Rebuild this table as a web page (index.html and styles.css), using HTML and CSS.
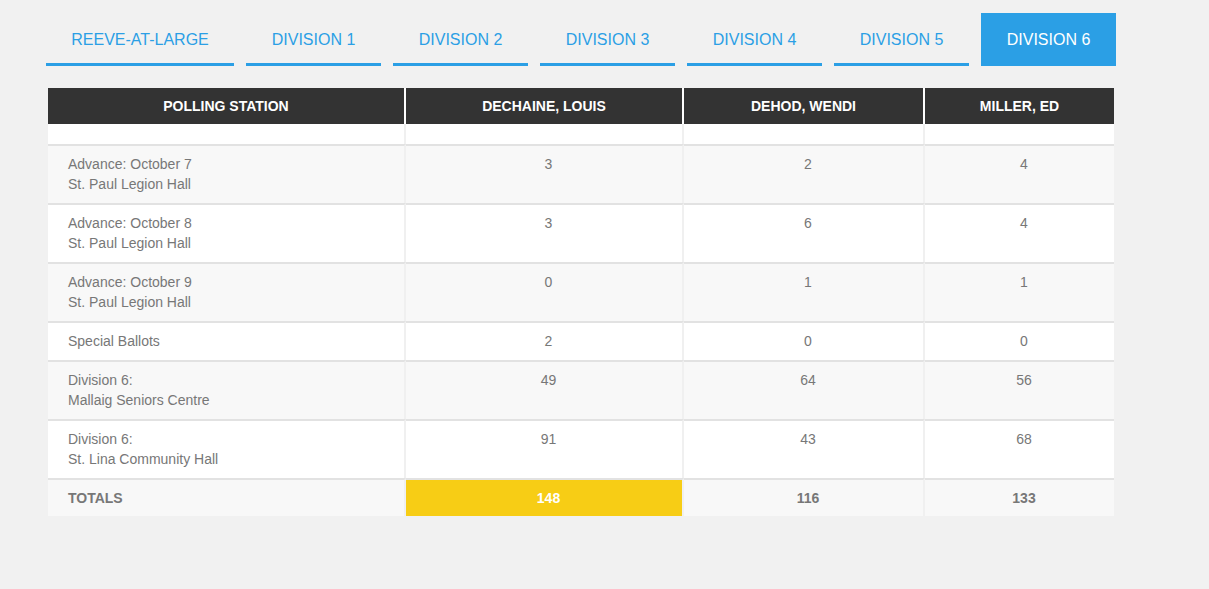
FILE: index.html
```html
<!DOCTYPE html>
<html>
<head>
<meta charset="utf-8">
<link rel="stylesheet" href="styles.css">
</head>
<body>
<nav class="tabs">
  <a class="tab">REEVE-AT-LARGE</a>
  <a class="tab">DIVISION 1</a>
  <a class="tab">DIVISION 2</a>
  <a class="tab">DIVISION 3</a>
  <a class="tab">DIVISION 4</a>
  <a class="tab">DIVISION 5</a>
  <a class="tab active">DIVISION 6</a>
</nav>
<table class="results">
  <colgroup>
    <col class="c1"><col class="c2"><col class="c3"><col class="c4">
  </colgroup>
  <thead>
    <tr><th>POLLING STATION</th><th>DECHAINE, LOUIS</th><th>DEHOD, WENDI</th><th>MILLER, ED</th></tr>
  </thead>
  <tbody>
    <tr class="empty"><td></td><td></td><td></td><td></td></tr>
    <tr class="alt"><td class="st">Advance: October 7<br>St. Paul Legion Hall</td><td>3</td><td>2</td><td>4</td></tr>
    <tr><td class="st">Advance: October 8<br>St. Paul Legion Hall</td><td>3</td><td>6</td><td>4</td></tr>
    <tr class="alt"><td class="st">Advance: October 9<br>St. Paul Legion Hall</td><td>0</td><td>1</td><td>1</td></tr>
    <tr><td class="st">Special Ballots</td><td>2</td><td>0</td><td>0</td></tr>
    <tr class="alt"><td class="st">Division 6:<br>Mallaig Seniors Centre</td><td>49</td><td>64</td><td>56</td></tr>
    <tr><td class="st">Division 6:<br>St. Lina Community Hall</td><td>91</td><td>43</td><td>68</td></tr>
    <tr class="totals"><td class="st">TOTALS</td><td class="win">148</td><td>116</td><td>133</td></tr>
  </tbody>
</table>
</body>
</html>
```
FILE: styles.css
```css
html, body {
  margin: 0;
  padding: 0;
  background: #f1f1f1;
  font-family: "Liberation Sans", Arial, sans-serif;
}
.tabs {
  display: flex;
  gap: 12px;
  padding: 13px 0 0 46px;
}
.tab {
  display: block;
  height: 50px;
  line-height: 53px;
  padding: 0 25px;
  border-bottom: 3px solid #2b9fe5;
  color: #2b9fe5;
  font-size: 16px;
  text-align: center;
  cursor: pointer;
}
.tab:first-child { width: 138px; }
.tab:not(:first-child) { width: 85px; }
.tab.active {
  background: #2b9fe5;
  color: #fff;
  border-bottom-color: #2b9fe5;
}
.results {
  margin: 22px 0 0 48px;
  border-collapse: separate;
  border-spacing: 0;
  table-layout: fixed;
  width: 1066px;
}
.c1 { width: 358px; }
.c2 { width: 278px; }
.c3 { width: 241px; }
.c4 { width: 189px; }
.results th {
  background: #333;
  color: #fff;
  font-size: 14px;
  font-weight: bold;
  height: 36px;
  padding: 0;
  text-align: center;
  vertical-align: middle;
  border-right: 2px solid #fff;
}
.results th:last-child { border-right: 0; }
.results td {
  background: #fff;
  color: #777;
  font-size: 14px;
  line-height: 20px;
  padding: 8px 10px 9px 19px;
  text-align: center;
  vertical-align: top;
  border-right: 2px solid #f0f0f0;
  border-top: 2px solid #e2e2e2;
}
.results td:last-child { border-right: 0; }
.results td.st {
  text-align: left;
  padding-left: 20px;
}
.results tr.alt td { background: #f8f8f8; }
.results tr.empty td {
  height: 20px;
  padding: 0;
  border-top: 0;
}
.results tr.totals td {
  background: #f8f8f8;
  height: 36px;
  padding: 0 10px 0 19px;
  vertical-align: middle;
  font-weight: bold;
  color: #777;
}
.results tr.totals td.st { padding-left: 20px; }
.results tr.totals td.win {
  background: #f7cd15;
  color: #fff;
}
```
